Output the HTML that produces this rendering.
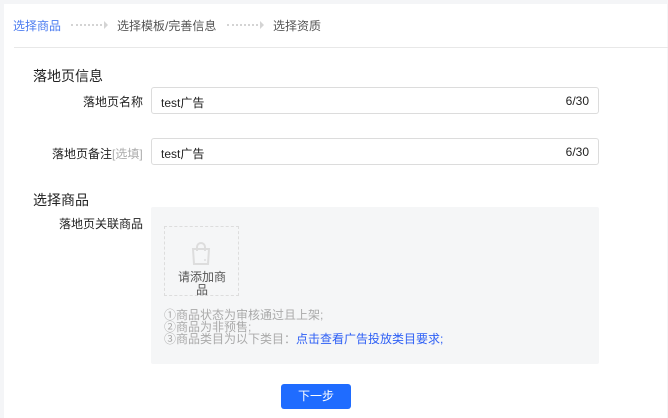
<!DOCTYPE html>
<html><head><meta charset="utf-8"><style>
*{margin:0;padding:0;box-sizing:border-box}
body{width:668px;height:418px;background:#f4f5f7;font-family:"Liberation Sans","Noto Sans CJK SC",sans-serif;font-size:12px;color:#333;position:relative;overflow:hidden}
.card{position:absolute;left:4px;top:4px;width:663px;height:414px;background:#fff}
.a{position:absolute;white-space:nowrap}
.step{top:17px;font-size:12px;color:#555}
.dots{top:24px;width:31px;border-top:2px dotted #d4d4d4}
.arr{top:21px;width:0;height:0;border-left:4px solid #d4d4d4;border-top:4px solid transparent;border-bottom:4px solid transparent}
.inp{position:absolute;left:151px;width:448px;height:27px;border:1px solid #dcdcdc;border-radius:3px;font-size:12px;color:#222}
.inp span{position:absolute;left:9px;top:6px}
.inp b{position:absolute;right:9px;top:6px;font-weight:normal}
.h{font-size:14px;color:#222}
.lab{font-size:12px;color:#222}
</style></head><body>
<div class="card"></div>
<div class="a step" style="left:13px;color:#4c7cf0">选择商品</div>
<div class="a dots" style="left:71px"></div><div class="a arr" style="left:104px"></div>
<div class="a step" style="left:117px">选择模板/完善信息</div>
<div class="a dots" style="left:227px"></div><div class="a arr" style="left:260px"></div>
<div class="a step" style="left:273px">选择资质</div>
<div class="a" style="left:14px;top:47px;width:654px;border-top:1px solid #e8e8e8"></div>
<div class="a h" style="left:33px;top:66px">落地页信息</div>
<div class="a lab" style="left:83px;top:93px">落地页名称</div>
<div class="inp" style="top:87px"><span>test广告</span><b>6/30</b></div>
<div class="a lab" style="left:52px;top:145px">落地页备注<span style="color:#aaa">[选填]</span></div>
<div class="inp" style="top:138px"><span>test广告</span><b>6/30</b></div>
<div class="a h" style="left:33px;top:190px">选择商品</div>
<div class="a lab" style="left:59px;top:215px">落地页关联商品</div>
<div class="a" style="left:151px;top:207px;width:448px;height:157px;background:#f5f6f7;border-radius:2px"></div>
<div class="a" style="left:164px;top:226px;width:75px;height:70px;border:1px dashed #ddd"></div>
<svg class="a" style="left:190px;top:242px" width="22" height="24" viewBox="0 0 22 24"><path d="M3 7h16l-1 15H4z" fill="none" stroke="#ddd" stroke-width="2"/><path d="M7 9V5a4 4 0 0 1 8 0v4" fill="none" stroke="#ddd" stroke-width="2"/><path d="M14 18h2" stroke="#ddd" stroke-width="1.5"/></svg>
<div class="a" style="left:178px;top:271px;font-size:12px;color:#555;line-height:13px;text-align:center;width:48px;white-space:normal">请添加商品</div>
<div class="a" style="left:164px;top:309px;font-size:12px;color:#aaa;line-height:12px">①商品状态为审核通过且上架;<br>②商品为非预售;<br>③商品类目为以下类目：<span style="color:#2d5ff5">点击查看广告投放类目要求;</span></div>
<div class="a" style="left:281px;top:384px;width:70px;height:25px;background:#1f6cff;border-radius:3px;color:#fff;text-align:center;line-height:25px;font-size:12px">下一步</div>
</body></html>
